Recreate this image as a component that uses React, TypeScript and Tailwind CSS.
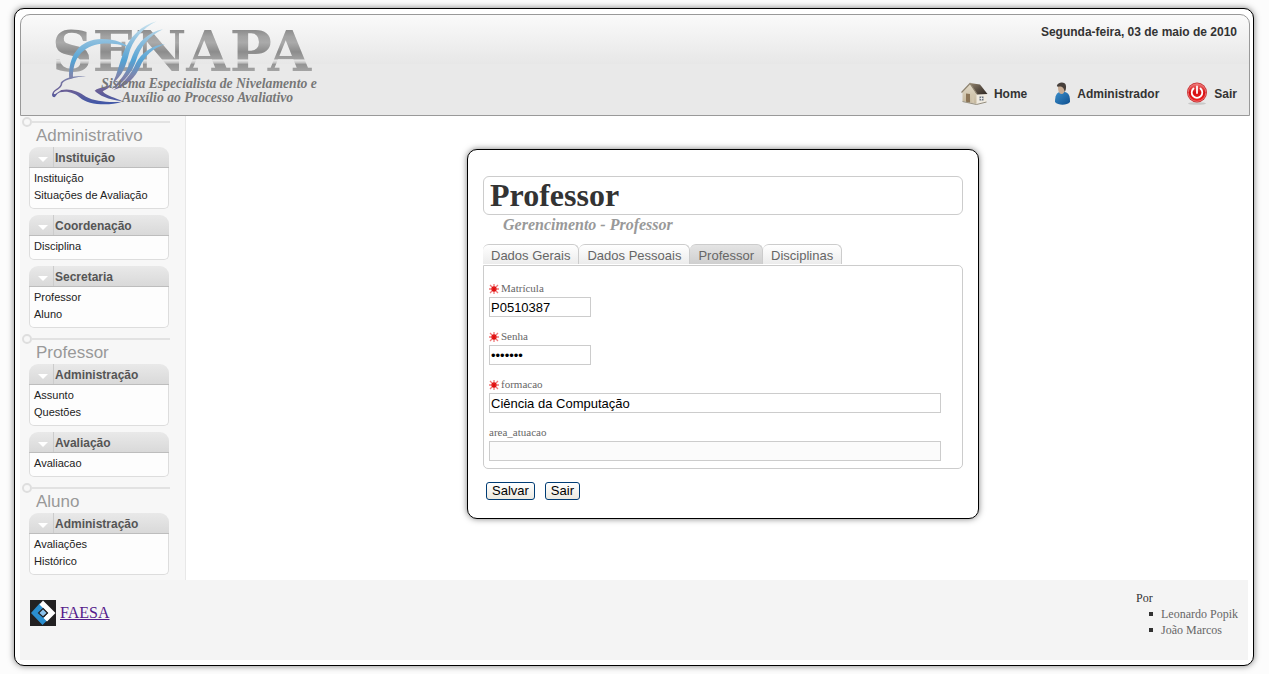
import React from "react";

type Block = { title: string; items: string[] };
type Group = { title: string; blocks: Block[] };

const groups: Group[] = [
  {
    title: "Administrativo",
    blocks: [
      { title: "Instituição", items: ["Instituição", "Situações de Avaliação"] },
      { title: "Coordenação", items: ["Disciplina"] },
      { title: "Secretaria", items: ["Professor", "Aluno"] },
    ],
  },
  {
    title: "Professor",
    blocks: [
      { title: "Administração", items: ["Assunto", "Questões"] },
      { title: "Avaliação", items: ["Avaliacao"] },
    ],
  },
  {
    title: "Aluno",
    blocks: [{ title: "Administração", items: ["Avaliações", "Histórico"] }],
  },
];

const tabs = ["Dados Gerais", "Dados Pessoais", "Professor", "Disciplinas"];

function Logo() {
  return (
    <svg width="270" height="95" viewBox="150 45 810 285" role="img" aria-label="SENAPA">
      <defs>
        <linearGradient id="metal" gradientUnits="userSpaceOnUse" x1="0" y1="90" x2="0" y2="216">
          <stop offset="0" stopColor="#8c8c8c" />
          <stop offset="0.15" stopColor="#a2a2a2" />
          <stop offset="0.3" stopColor="#aaaaaa" />
          <stop offset="0.52" stopColor="#8c8c8c" />
          <stop offset="0.68" stopColor="#a0a0a0" />
          <stop offset="0.72" stopColor="#e6e6e6" />
          <stop offset="0.77" stopColor="#c9c9c9" />
          <stop offset="0.82" stopColor="#949494" />
          <stop offset="1" stopColor="#a6a6a6" />
        </linearGradient>
        <linearGradient id="bird" gradientUnits="userSpaceOnUse" x1="0" y1="62" x2="0" y2="312">
          <stop offset="0" stopColor="#cfe6f0" />
          <stop offset="0.25" stopColor="#8bbede" />
          <stop offset="0.48" stopColor="#54a2d3" />
          <stop offset="0.66" stopColor="#7d86ae" />
          <stop offset="0.84" stopColor="#6a5f96" />
          <stop offset="1" stopColor="#3f57a8" />
        </linearGradient>
      </defs>
      <text x="156" y="213" fontSize="168" fontWeight="700" fill="url(#metal)" className="font-['DejaVu_Serif',serif]">
        SENAPA
      </text>
      <g fill="url(#bird)">
        <path d="M208 238C202 168 240 117 305 117C348 117 374 130 386 142C356 130 326 129 304 131C248 137 217 176 219 234Z" />
        <path d="M470 64C426 74 388 112 370 158C358 190 352 220 338 250C368 226 378 196 386 164C396 122 428 84 470 64Z" />
        <path d="M489 88C446 96 414 126 398 166C384 204 374 232 334 268C376 246 396 216 408 182C420 142 446 108 489 88Z" />
        <path d="M495 132C456 136 424 158 408 190C394 222 372 250 340 270C384 256 406 232 420 200C434 168 460 144 495 132Z" />
        <path d="M258 229C228 225 192 234 182 248C184 258 172 264 162 272C154 281 154 289 163 292C170 288 168 282 180 277C202 271 226 280 240 293C262 313 322 320 366 305C326 308 284 304 258 290C236 274 210 264 184 270L166 282C160 284 160 279 166 274C178 266 186 262 187 250C196 238 228 231 258 229Z" />
        <path d="M336 252C318 262 300 260 284 272C298 286 322 298 368 304C348 294 318 288 308 274C320 268 330 262 336 252Z" />
      </g>
      <g fill="#777777" fontSize="41" fontWeight="700" fontStyle="italic" className="font-['Liberation_Serif',serif]">
        <text x="304" y="264">Sistema Especialista de Nivelamento e</text>
        <text x="366" y="306">Auxílio ao Processo Avaliativo</text>
      </g>
    </svg>
  );
}

function HouseIcon() {
  return (
    <svg width="27" height="23" viewBox="0 0 27 23" aria-hidden="true">
      <defs>
        <linearGradient id="roof" x1="0" y1="0" x2="1" y2="1">
          <stop offset="0" stopColor="#94866f" />
          <stop offset="0.5" stopColor="#5b5044" />
          <stop offset="1" stopColor="#2f2823" />
        </linearGradient>
        <linearGradient id="wall" x1="0" y1="0" x2="0" y2="1">
          <stop offset="0" stopColor="#e2dac8" />
          <stop offset="1" stopColor="#c4b79c" />
        </linearGradient>
      </defs>
      <path d="M1.500 10L9 2L16 11.500V22L1.500 19Z" fill="url(#wall)" />
      <path d="M15.500 11H25.500V19.500L15.500 22Z" fill="#efeae0" />
      <path d="M9 1L19 2.500L26.500 12L16 12.500Z" fill="url(#roof)" />
      <path d="M0.500 10.500L9 1.500L16 12" stroke="#8e836f" strokeWidth="1.200" fill="none" />
      <path d="M5 11.500L9 12V20.500L5 19.700Z" fill="#8c7556" />
      <path d="M10.500 12.500H13V21L10.500 20.600Z" fill="#d2c6ae" />
      <path d="M18.500 14.500H22.500V18.500H18.500Z" fill="#6b7480" />
      <path d="M20.500 14.500V18.500M18.500 16.500H22.500" stroke="#fff" strokeWidth="0.700" />
      <path d="M1.500 19.500L15.500 22.500L25.500 20" stroke="#8b8372" fill="none" strokeWidth="0.900" />
    </svg>
  );
}

function UserIcon() {
  return (
    <svg width="17" height="23" viewBox="0 0 17 23" aria-hidden="true">
      <defs>
        <linearGradient id="shirt" x1="0" y1="0" x2="1" y2="1">
          <stop offset="0" stopColor="#3b8fcb" />
          <stop offset="1" stopColor="#0f4f8f" />
        </linearGradient>
      </defs>
      <path d="M1 20C1 14 2.500 10.500 6 10L11 10C15 11 16 14 16 20C13 23.500 4 23.500 1 20Z" fill="url(#shirt)" />
      <path d="M4 5C4 2 11 2 11 6C11 10 9.500 12 7.500 12C5 12 4 9 4 5Z" fill="#c8ac94" />
      <path d="M2.800 4C3.500 0 11.500-1 12 4C12.200 7 11.500 9.500 10.500 10C10.500 7 9 4.500 6 4.500C4.500 4.500 3.500 5 2.800 4Z" fill="#463f3b" />
    </svg>
  );
}

function PowerIcon() {
  return (
    <svg width="22" height="23" viewBox="0 0 22 23" aria-hidden="true">
      <defs>
        <linearGradient id="power" x1="0" y1="0" x2="0" y2="1">
          <stop offset="0" stopColor="#ef7272" />
          <stop offset="0.5" stopColor="#d60f12" />
          <stop offset="1" stopColor="#f02222" />
        </linearGradient>
      </defs>
      <ellipse cx="11" cy="21.500" rx="9" ry="1.300" fill="#c9c9c9" />
      <circle cx="11" cy="10.500" r="10" fill="#c9282a" />
      <circle cx="11" cy="10.500" r="8.800" fill="url(#power)" stroke="#f3a5a5" strokeWidth="0.600" />
      <path d="M7.500 6.500A5.300 5.300 0 1 0 14.500 6.500M11 4.500V11" fill="none" stroke="#fff" strokeWidth="1.800" strokeLinecap="round" />
    </svg>
  );
}

function FaesaIcon() {
  return (
    <svg width="26" height="26" viewBox="0 0 26 26" aria-hidden="true">
      <rect width="26" height="26" fill="#222122" />
      <path d="M10 3L1 13L12.500 25L17.500 20L9 12.500L14 7.500Z" fill="#2b8fd0" />
      <path d="M13 0.500L25.500 13L17 21.500L13.500 18L18 13L9.500 4.500Z" fill="#fff" />
      <path d="M13 8.500L17.500 13L13 17L8.500 13Z" fill="#8cc3ec" stroke="#222122" strokeWidth="1.200" />
    </svg>
  );
}

function RequiredMark() {
  return (
    <svg width="10" height="10" viewBox="0 0 10 10" role="img" aria-label="obrigatório">
      <path d="M5 0V10M0 5H10M1 1L9 9M9 1L1 9" stroke="#f07878" strokeWidth="1.300" />
      <path d="M5 2V8M2 5H8M3 3L7 7M7 3L3 7" stroke="#e01010" strokeWidth="1.200" />
    </svg>
  );
}

function MenuBlock({ block }: { block: Block }) {
  return (
    <section className="w-[140px]">
      <button
        type="button"
        className="flex h-[21px] w-full items-center rounded-t-[9px] border-b border-[#bdbdbd] bg-linear-to-b from-[#e9e9e9] to-[#d9d9d9] text-left"
      >
        <span className="flex h-full w-[25px] items-center justify-center border-r border-[#cccccc] pt-1 pl-1">
          <svg width="10" height="5" viewBox="0 0 10 5" aria-hidden="true">
            <path d="M0 0H10L5 5Z" fill="#fff" />
          </svg>
        </span>
        <span className="pt-[2px] pl-px text-[12px] leading-[18px] font-bold text-[#555555]">{block.title}</span>
      </button>
      <ul className="rounded-b-[5px] border border-t-0 border-[#dddddd] bg-[#fdfdfd] pt-[2px] pb-1 pl-1">
        {block.items.map((item) => (
          <li key={item} className="h-[17px] text-[11px] leading-[17px] whitespace-nowrap text-[#222222]">
            <a href="#">{item}</a>
          </li>
        ))}
      </ul>
    </section>
  );
}

function Field({
  id,
  label,
  required,
  type = "text",
  value,
  wide,
}: {
  id: string;
  label: string;
  required?: boolean;
  type?: string;
  value: string;
  wide?: boolean;
}) {
  return (
    <div className="flex flex-col items-start">
      <label
        htmlFor={id}
        className="flex h-[15px] items-center gap-[2px] pb-[2px] font-['Liberation_Serif',serif] text-[11px] leading-[13px] text-[#666666]"
      >
        {required && <RequiredMark />}
        {label}
      </label>
      <input
        id={id}
        type={type}
        defaultValue={value}
        className={`h-5 border border-[#cccccc] px-px text-[13px] text-black outline-none ${wide ? "w-[452px]" : "w-[102px]"} ${
          value ? "bg-white" : "bg-[#fbfbfb]"
        }`}
      />
    </div>
  );
}

function NavLink({ icon, text }: { icon: React.ReactNode; text: string }) {
  return (
    <a href="#" className="flex items-center gap-[6px]">
      {icon}
      {text}
    </a>
  );
}

export default function App() {
  return (
    <div className="min-h-screen bg-[#fcfcfc] pt-2 pr-[15px] pb-2 pl-[14px] font-['Liberation_Sans',Arial,sans-serif]">
      <div className="rounded-[10px] border border-black bg-white pt-[5px] pr-[3px] pb-[5px] pl-[5px] shadow-[0_0_6px_rgba(0,0,0,0.5)]">
        <header className="flex justify-between rounded-t-[10px] border border-[#999999] bg-[linear-gradient(#fafafa_0,#e7e7e7_49px,#e9e9e9_49px,#e9e9e9_100%)]">
          <div className="pb-[5px] pl-[29px]">
            <Logo />
          </div>
          <div className="flex flex-col justify-between pt-[9px] pr-3 pb-[10px] text-[12px] leading-4 font-bold text-[#333333]">
            <p className="text-right">Segunda-feira, 03 de maio de 2010</p>
            <nav className="flex items-center justify-end gap-[27px]">
              <NavLink icon={<HouseIcon />} text="Home" />
              <NavLink icon={<UserIcon />} text="Administrador" />
              <NavLink icon={<PowerIcon />} text="Sair" />
            </nav>
          </div>
        </header>

        <div className="flex">
          <aside className="flex w-[166px] shrink-0 flex-col gap-[6px] border-r border-[#e8e8e8] bg-[#f7f7f7] pt-px pb-[5px]">
            {groups.map((group) => (
              <div key={group.title}>
                <div className="flex items-center pl-[2px]">
                  <span className="size-[10px] rounded-full border-2 border-[#dedede] bg-[#f7f7f7]" />
                  <span className="h-[2px] w-[138px] bg-[#e2e2e2]" />
                </div>
                <h2 className="pt-px pb-[3px] pl-4 text-[17px] leading-4 text-[#999999]">{group.title}</h2>
                <div className="flex flex-col gap-[6px] pl-[9px]">
                  {group.blocks.map((block) => (
                    <MenuBlock key={block.title} block={block} />
                  ))}
                </div>
              </div>
            ))}
          </aside>

          <main className="flex grow items-start justify-center pt-[33px] pl-[10px]">
            <div className="w-[512px] rounded-[10px] border border-black bg-white px-[15px] pt-[26px] pb-[18px] shadow-[0_0_6px_rgba(0,0,0,0.5)]">
              <h1 className="rounded-[6px] border border-[#cccccc] pl-[6px] font-['Liberation_Serif',serif] text-[32px] leading-[37px] font-bold text-[#333333]">
                Professor
              </h1>
              <p className="pl-5 font-['Liberation_Serif',serif] text-[16px] leading-5 font-bold text-[#999999] italic">
                Gerencimento - Professor
              </p>

              <div role="tablist" className="flex pt-[9px] pb-px">
                {tabs.map((tab) => (
                  <button
                    key={tab}
                    type="button"
                    role="tab"
                    aria-selected={tab === "Professor"}
                    className={`h-5 rounded-t-[6px] border-t border-r border-[#cccccc] px-2 pt-[2px] text-[13px] leading-[17px] text-[#666666] ${
                      tab === "Professor" ? "bg-linear-to-b from-[#e4e4e4] to-[#cfcfcf]" : "bg-linear-to-b from-white to-[#ececec]"
                    }`}
                  >
                    {tab}
                  </button>
                ))}
              </div>

              <form onSubmit={(e) => e.preventDefault()}>
                <div className="flex flex-col gap-[13px] rounded-[5px] rounded-tl-none border border-[#cccccc] pt-4 pb-[7px] pl-[5px]">
                  <Field id="matricula" label="Matrícula" required value="P0510387" />
                  <Field id="senha" label="Senha" required type="password" value="1234567" />
                  <Field id="formacao" label="formacao" required value="Ciência da Computação" wide />
                  <Field id="area_atuacao" label="area_atuacao" value="" wide />
                </div>
                <div className="flex gap-[10px] pt-[13px] pl-[3px]">
                  {["Salvar", "Sair"].map((text) => (
                    <button
                      key={text}
                      type="submit"
                      className="h-[18px] rounded-[3px] border border-[#003c74] bg-linear-to-b from-white to-[#ece9e0] px-[5px] text-[13px] leading-4 text-black"
                    >
                      {text}
                    </button>
                  ))}
                </div>
              </form>
            </div>
          </main>
        </div>

        <footer className="mr-[2px] flex min-h-20 justify-between bg-[#f4f4f4] pr-[10px] pl-[10px] font-['Liberation_Serif',serif]">
          <a href="#" className="mt-5 flex h-[26px] items-center gap-1 text-[16px] text-[#551a8b] underline">
            <FaesaIcon />
            FAESA
          </a>
          <div className="pt-[10px] text-[12px] leading-4 text-[#333333]">
            <p>Por</p>
            <ul className="pl-[13px]">
              {["Leonardo Popik", "João Marcos"].map((name) => (
                <li key={name} className="flex items-center gap-2">
                  <span className="size-1 bg-[#333333]" />
                  <span className="text-[#666666]">{name}</span>
                </li>
              ))}
            </ul>
          </div>
        </footer>
      </div>
    </div>
  );
}
